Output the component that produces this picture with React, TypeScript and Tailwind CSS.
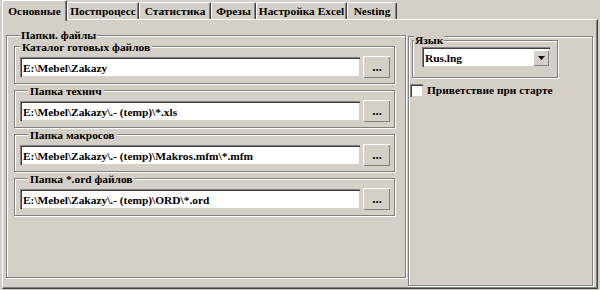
import React from "react";

const tabs = [
  { label: "Основные", w: 65, active: true },
  { label: "Постпроцесс", w: 72 },
  { label: "Статистика", w: 72 },
  { label: "Фрезы", w: 45 },
  { label: "Настройка Excel", w: 91 },
  { label: "Nesting", w: 50 },
];

const groups = [
  { label: "Каталог готовых файлов", value: "E:\\Mebel\\Zakazy", left: "left-[5px]" },
  { label: "Папка технич", value: "E:\\Mebel\\Zakazy\\.- (temp)\\*.xls", left: "left-[13px]" },
  { label: "Папка макросов", value: "E:\\Mebel\\Zakazy\\.- (temp)\\Makros.mfm\\*.mfm", left: "left-[13px]" },
  { label: "Папка *.ord файлов", value: "E:\\Mebel\\Zakazy\\.- (temp)\\ORD\\*.ord", left: "left-[13px]" },
];

const etched = "border border-[#808080] shadow-[1px_1px_0_#fff,inset_1px_1px_0_#fff]";
const sunken =
  "bg-white border-t border-l border-[#808080] border-r-white border-b-white shadow-[inset_1px_1px_0_#404040,inset_-1px_-1px_0_#d4d0c8]";
const raised =
  "bg-[#d4d0c8] border-t border-l border-white border-r-[#404040] border-b-[#404040] shadow-[inset_-1px_-1px_0_#808080]";

function Field({ value }: { value: string }) {
  return (
    <div className={`w-[340px] h-[20px] ${sunken} flex items-center pl-[2px] leading-[14px] whitespace-nowrap overflow-hidden`}>
      {value}
    </div>
  );
}

function DotsButton() {
  return (
    <div className={`ml-[3px] w-[27px] h-[22px] ${raised} flex items-center justify-center leading-[10px] pb-[2px] text-[13px]`}>
      ...
    </div>
  );
}

export default function App() {
  return (
    <div className="w-[600px] h-[290px] bg-[#d4d0c8] font-['Liberation_Serif',serif] font-bold text-[11.4px] text-black overflow-hidden">
      {/* tabs */}
      <div className="relative z-10 flex items-end h-[21px] pl-[2px]">
        {tabs.map((t) =>
          t.active ? (
            <div
              key={t.label}
              style={{ width: t.w }}
              className="h-[21px] bg-[#d4d0c8] border-t border-l border-white border-r border-r-[#404040] rounded-tl-[2px] rounded-tr-[2px] shadow-[inset_-1px_0_0_#808080] flex items-start justify-center pt-[3px] leading-[14px] whitespace-nowrap"
            >
              {t.label}
            </div>
          ) : (
            <div
              key={t.label}
              style={{ width: t.w }}
              className="h-[17px] mb-[2px] bg-[#d4d0c8] border-t border-l border-white border-r border-r-[#404040] rounded-tl-[2px] rounded-tr-[2px] shadow-[inset_-1px_0_0_#808080] flex items-start justify-center pt-[1px] leading-[14px] whitespace-nowrap"
            >
              {t.label}
            </div>
          )
        )}
      </div>
      {/* panel */}
      <div className="-mt-[2px] ml-[2px] w-[596px] h-[270px] border-t border-l border-white border-r border-b border-r-[#404040] border-b-[#404040] shadow-[inset_-1px_-1px_0_#808080] flex items-start pl-[3px]">
        {/* left group */}
        <div className={`relative mt-[15px] w-[400px] h-[243px] ${etched}`}>
          <div className="absolute left-[13px] -top-[7px] bg-[#d4d0c8] px-[1px] leading-[13px]">Папки. файлы</div>
          <div className="ml-[7px] mt-[10px] flex flex-col gap-[6px]">
            {groups.map((g) => (
              <div key={g.label} className={`relative w-[381px] h-[38px] ${etched} flex items-center pl-[5px] pt-[4px]`}>
                <div className={`absolute ${g.left} -top-[6px] bg-[#d4d0c8] px-[2px] leading-[13px] whitespace-nowrap`}>{g.label}</div>
                <Field value={g.value} />
                <DotsButton />
              </div>
            ))}
          </div>
        </div>
        {/* right panel */}
        <div className={`ml-[2px] mt-[16px] w-[185px] h-[250px] ${etched} flex flex-col`}>
          <div className={`relative ml-[3px] mt-[3px] w-[146px] h-[38px] ${etched}`}>
            <div className="absolute left-[1px] -top-[7px] bg-[#d4d0c8] px-[1px] leading-[13px]">Язык</div>
            <div className={`ml-[9px] mt-[6px] w-[128px] h-[20px] ${sunken} flex items-center`}>
              <div className="flex-1 pl-[2px] leading-[14px]">Rus.lng</div>
              <div className={`mr-[1px] w-[16px] h-[16px] ${raised} flex items-center justify-center`}>
                <svg width="7" height="4" viewBox="0 0 7 4">
                  <polygon points="0,0 7,0 3.5,4" fill="#000" />
                </svg>
              </div>
            </div>
          </div>
          <div className="mt-[5px] ml-[1px] flex items-center gap-[4px]">
            <div className={`w-[13px] h-[13px] ${sunken}`} />
            <div className="leading-[14px] whitespace-nowrap">Приветствие при старте</div>
          </div>
        </div>
      </div>
    </div>
  );
}
